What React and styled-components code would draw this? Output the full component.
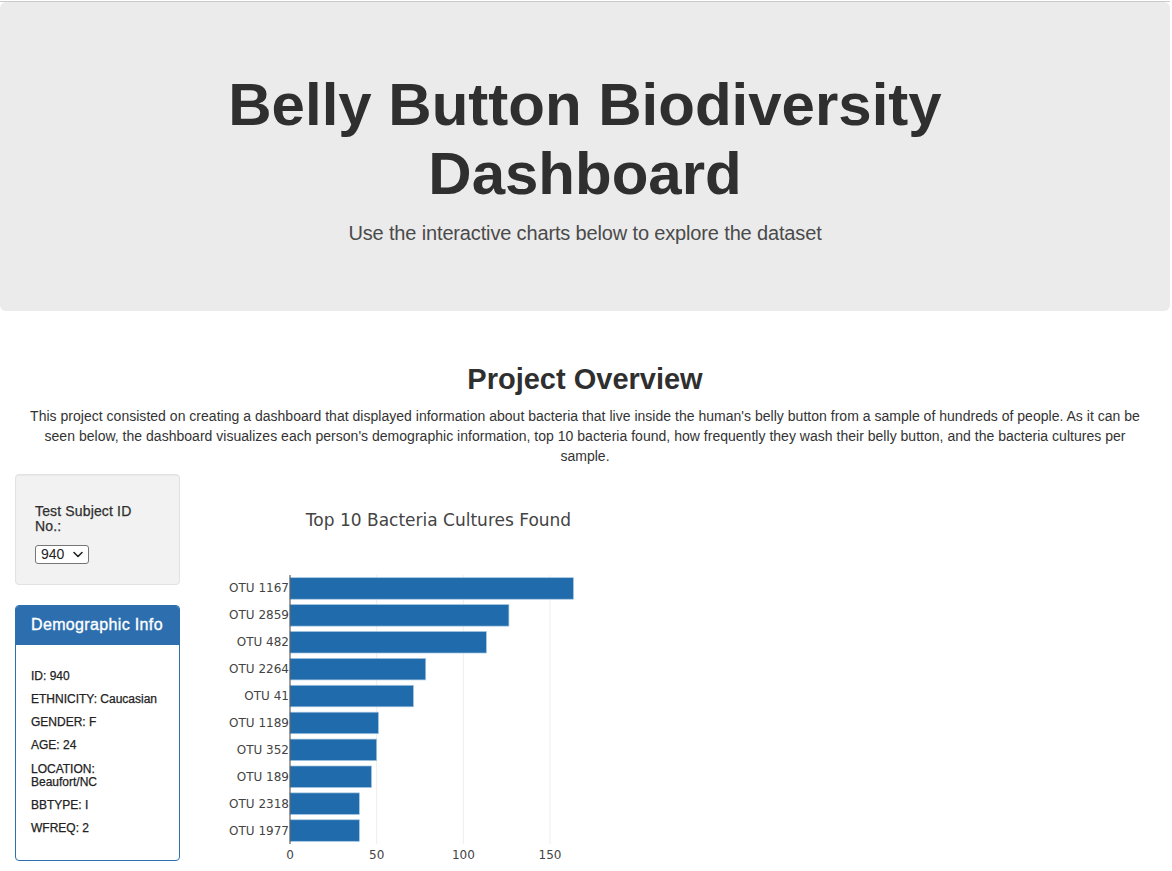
import React from 'react'
import styled, { createGlobalStyle } from 'styled-components'

const GlobalStyle = createGlobalStyle`
  html, body {
    margin: 0;
    padding: 0;
    background: #fff;
  }
  body {
    font-family: "Liberation Sans", Arial, Helvetica, sans-serif;
    font-size: 14px;
    line-height: 1.42857;
    color: #333;
  }
  * { box-sizing: border-box; }
`

const Page = styled.div`
  width: 1170px;
  padding-top: 1px;
`

const TopRule = styled.div`
  height: 1px;
  background: #c9c9c9;
`

const Jumbotron = styled.header`
  background: #ebebeb;
  border-radius: 6px;
  padding: 48px 75px;
  margin-bottom: 30px;
  text-align: center;
`

const Title = styled.h1`
  margin: 20px 0 10px;
  font-size: 60px;
  line-height: 69px;
  font-weight: 700;
  color: #2f2f2f;
`

const Lead = styled.p`
  margin: 0 0 15px;
  font-size: 20px;
  line-height: 30px;
  font-weight: 300;
  letter-spacing: -0.15px;
  color: #4a4a4a;
`

const Container = styled.main`
  padding: 0 15px;
`

const SectionTitle = styled.h2`
  margin: 52px 0 10px;
  font-size: 29px;
  line-height: 33px;
  font-weight: 700;
  text-align: center;
  color: #2f2f2f;
`

const Intro = styled.p`
  margin: 0 0 7px;
  text-align: center;
  line-height: 20px;
  letter-spacing: 0.02px;
`

const Row = styled.div`
  display: flex;
  margin: 0 -15px;
`

const Sidebar = styled.aside`
  width: 195px;
  padding: 0 15px;
  flex: none;
`

const ChartCol = styled.section`
  flex: 1;
  padding: 0 15px;
`

const Well = styled.div`
  background: #f2f2f2;
  border: 1px solid #e2e2e2;
  border-radius: 4px;
  padding: 19px;
  margin: 1px 0 20px;
  box-shadow: inset 0 1px 1px rgba(0, 0, 0, 0.04);
`

const SmallHeading = styled.h5`
  margin: 10px 0;
  font-size: 14px;
  line-height: 1.1;
  font-weight: 500;
  letter-spacing: 0.15px;
  color: #2f2f2f;
  -webkit-text-stroke: 0.25px #2f2f2f;
`

const SelectWrap = styled.div`
  position: relative;
  display: inline-block;
`

const Select = styled.select`
  appearance: none;
  width: 54px;
  height: 19px;
  padding: 0 0 0 5px;
  border: 1px solid #767676;
  border-radius: 3px;
  background: #fff;
  font-family: "Liberation Sans", Arial, sans-serif;
  font-size: 14px;
  line-height: 17px;
  color: #222;
`

const Chevron = styled.svg`
  position: absolute;
  right: 6px;
  top: 6px;
  pointer-events: none;
`

const Panel = styled.div`
  border: 1px solid #2d6fae;
  border-radius: 4px;
  background: #fff;
  overflow: hidden;
`

const PanelHeading = styled.div`
  background: #2d6fae;
  color: #fff;
  padding: 10px 15px 11px;
`

const PanelTitle = styled.h3`
  margin: 0;
  font-size: 16px;
  line-height: 18px;
  font-weight: 500;
  letter-spacing: 0.35px;
  -webkit-text-stroke: 0.35px #fff;
`

const PanelBody = styled.div`
  padding: 15px;
`

const InfoLine = styled.h6`
  margin: 10px 0;
  font-size: 12px;
  line-height: 1.1;
  font-weight: 500;
  color: #222;
  -webkit-text-stroke: 0.25px #222;
`

const ChartSvg = styled.svg`
  display: block;
  margin-top: 4px;
  font-family: "DejaVu Sans", Verdana, sans-serif;
`

const demographics = [
  'ID: 940',
  'ETHNICITY: Caucasian',
  'GENDER: F',
  'AGE: 24',
  'LOCATION: Beaufort/NC',
  'BBTYPE: I',
  'WFREQ: 2'
]

const bacteria = [
  { label: 'OTU 1167', value: 163.5 },
  { label: 'OTU 2859', value: 126.3 },
  { label: 'OTU 482', value: 113.3 },
  { label: 'OTU 2264', value: 78.3 },
  { label: 'OTU 41', value: 71.2 },
  { label: 'OTU 1189', value: 51 },
  { label: 'OTU 352', value: 50 },
  { label: 'OTU 189', value: 47 },
  { label: 'OTU 2318', value: 40 },
  { label: 'OTU 1977', value: 40 }
]

const BarChart = () => {
  const left = 80
  const top = 98
  const bottom = 367
  const step = (bottom - top) / bacteria.length
  const scale = 1.7333
  const ticks = [0, 50, 100, 150]
  return (
    <ChartSvg width="457" height="400">
      <text x="228.5" y="49" fontSize="17" fill="#444" textAnchor="middle">
        Top 10 Bacteria Cultures Found
      </text>
      {ticks.slice(1).map(t => (
        <line key={t} x1={left + t * scale} x2={left + t * scale} y1={top} y2={bottom} stroke="#eee" strokeWidth="1" />
      ))}
      {bacteria.map((b, i) => {
        const y = top + step * i + step * 0.1
        return (
          <g key={b.label}>
            <rect x={left} y={y} width={b.value * scale} height={step * 0.8} fill="#1f6bab" stroke="#a4c5e1" strokeWidth="0.7" />
            <text x={left - 1} y={y + step * 0.4} fontSize="12" fill="#444" textAnchor="end" dominantBaseline="central">
              {b.label}
            </text>
          </g>
        )
      })}
      <line x1={left} x2={left} y1={top} y2={bottom} stroke="#444" strokeWidth="1" />
      {ticks.map(t => (
        <text key={t} x={left + t * scale} y="382" fontSize="12" fill="#444" textAnchor="middle">
          {t}
        </text>
      ))}
    </ChartSvg>
  )
}

export default function App () {
  return (
    <Page>
      <GlobalStyle />
      <TopRule />
      <Jumbotron>
        <Title>Belly Button Biodiversity Dashboard</Title>
        <Lead>Use the interactive charts below to explore the dataset</Lead>
      </Jumbotron>
      <Container>
        <SectionTitle>Project Overview</SectionTitle>
        <Intro>
          This project consisted on creating a dashboard that displayed information about bacteria that live inside the human's belly button from a sample of hundreds of people. As it can be<br />
          seen below, the dashboard visualizes each person's demographic information, top 10 bacteria found, how frequently they wash their belly button, and the bacteria cultures per<br />
          sample.
        </Intro>
        <Row>
          <Sidebar>
            <Well>
              <SmallHeading>Test Subject ID No.:</SmallHeading>
              <SelectWrap>
                <Select defaultValue="940">
                  <option value="940">940</option>
                  <option value="941">941</option>
                  <option value="943">943</option>
                </Select>
                <Chevron width="10" height="7" viewBox="0 0 10 7">
                  <path d="M1 1.5 L5 5.5 L9 1.5" fill="none" stroke="#222" strokeWidth="1.6" strokeLinecap="round" strokeLinejoin="round" />
                </Chevron>
              </SelectWrap>
            </Well>
            <Panel>
              <PanelHeading>
                <PanelTitle>Demographic Info</PanelTitle>
              </PanelHeading>
              <PanelBody>
                {demographics.map(d => <InfoLine key={d}>{d}</InfoLine>)}
              </PanelBody>
            </Panel>
          </Sidebar>
          <ChartCol>
            <BarChart />
          </ChartCol>
        </Row>
      </Container>
    </Page>
  )
}
